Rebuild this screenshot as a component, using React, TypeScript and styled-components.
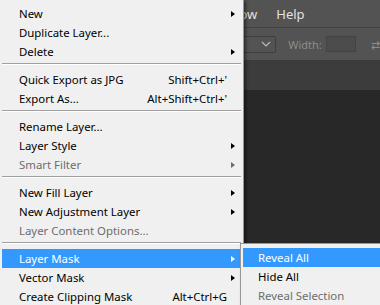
import React from "react";
import styled, { createGlobalStyle } from "styled-components";

const GlobalStyle = createGlobalStyle`
  html, body {
    margin: 0;
    padding: 0;
    background: #282828;
  }
  * { box-sizing: border-box; }
`;

const Screen = styled.div`
  position: relative;
  width: 380px;
  height: 305px;
  overflow: hidden;
  display: flex;
  flex-direction: column;
  background: #282828;
  font-family: "Noto Sans", "Open Sans", sans-serif;
`;

const MenuBar = styled.div`
  height: 27px;
  display: flex;
  align-items: center;
  gap: 19px;
  padding-left: 208px;
  background: #535353;
  color: #e2e2e2;
  font-size: 13px;
  white-space: nowrap;
`;

const OptionsBar = styled.div`
  height: 34px;
  display: flex;
  align-items: center;
  border-top: 1px solid #434343;
  border-bottom: 1px solid #3a3a3a;
  background: #535353;
  padding-left: 200px;
  white-space: nowrap;
`;

const Dropdown = styled.div`
  width: 83px;
  height: 17px;
  border: 1px solid #3e3e3e;
  border-radius: 2px;
  display: flex;
  align-items: center;
  justify-content: flex-end;
  padding-right: 4px;
  color: #bdbdbd;
`;

const Label = styled.span`
  margin-left: 12px;
  color: #8e8e8e;
  font-size: 11px;
`;

const FieldBox = styled.div`
  width: 33px;
  height: 16px;
  margin-left: 4px;
  border: 1px solid #444444;
  background: #4c4c4c;
`;

const SwapGlyph = styled.span`
  margin-left: 15px;
  color: #8e8e8e;
  font-size: 11px;
`;

const TabStrip = styled.div`
  height: 29px;
  background: #3c3c3c;
`;

const Canvas = styled.div`
  flex: 1;
  background: #282828;
`;

const Menu = styled.div<{ $left: number; $top: number; $width: number }>`
  position: absolute;
  left: ${(p) => p.$left}px;
  top: ${(p) => p.$top}px;
  width: ${(p) => p.$width}px;
  padding: 4px 0 4px;
  background: #f0f0f0;
  border: 1px solid #979797;
  box-shadow: 2px 2px 3px rgba(0, 0, 0, 0.45);
  font-size: 11.4px;
  color: #000;
`;

const Row = styled.div<{ $active?: boolean; $disabled?: boolean; $indent: number }>`
  height: 19px;
  margin: 0 2px;
  display: grid;
  grid-template-columns: 1fr auto 8px;
  align-items: center;
  padding: 0 6px 0 ${(p) => p.$indent}px;
  white-space: nowrap;
  background: ${(p) => (p.$active ? "#3399ff" : "transparent")};
  color: ${(p) => (p.$active ? "#ffffff" : p.$disabled ? "#6d6d6d" : "#000000")};
`;

const Shortcut = styled.span`
  text-align: right;
`;

const Arrow = styled.span<{ $show: boolean }>`
  justify-self: end;
  width: 0;
  height: 0;
  border-top: 3.5px solid transparent;
  border-bottom: 3.5px solid transparent;
  border-left: ${(p) => (p.$show ? "4px solid currentColor" : "0")};
`;

const Separator = styled.div`
  height: 9px;
  padding-top: 2px;
  &::after {
    content: "";
    display: block;
    height: 1px;
    margin: 0 2px;
    background: #a0a0a0;
    border-bottom: 1px solid #ffffff;
  }
`;

type Item =
  | { sep: true }
  | { label: string; shortcut?: string; sub?: boolean; disabled?: boolean; active?: boolean };

const layerMenu: Item[] = [
  { label: "New", sub: true },
  { label: "Duplicate Layer..." },
  { label: "Delete", sub: true },
  { sep: true },
  { label: "Quick Export as JPG", shortcut: "Shift+Ctrl+'" },
  { label: "Export As...", shortcut: "Alt+Shift+Ctrl+'" },
  { sep: true },
  { label: "Rename Layer..." },
  { label: "Layer Style", sub: true },
  { label: "Smart Filter", sub: true, disabled: true },
  { sep: true },
  { label: "New Fill Layer", sub: true },
  { label: "New Adjustment Layer", sub: true },
  { label: "Layer Content Options...", disabled: true },
  { sep: true },
  { label: "Layer Mask", sub: true, active: true },
  { label: "Vector Mask", sub: true },
  { label: "Create Clipping Mask", shortcut: "Alt+Ctrl+G" },
];

const maskMenu: Item[] = [
  { label: "Reveal All", active: true },
  { label: "Hide All" },
  { label: "Reveal Selection", disabled: true },
];

function MenuItems({ items, indent }: { items: Item[]; indent: number }) {
  return (
    <>
      {items.map((it, i) =>
        "sep" in it ? (
          <Separator key={i} />
        ) : (
          <Row key={i} $active={it.active} $disabled={it.disabled} $indent={indent}>
            <span>{it.label}</span>
            <Shortcut>{it.shortcut}</Shortcut>
            <Arrow $show={!!it.sub} />
          </Row>
        )
      )}
    </>
  );
}

export default function App() {
  return (
    <>
      <GlobalStyle />
      <Screen>
        <MenuBar>
          <span>Window</span>
          <span>Help</span>
        </MenuBar>
        <OptionsBar>
          <Dropdown>
            <svg width="10" height="6" viewBox="0 0 10 6">
              <path d="M1 1 L5 5 L9 1" fill="none" stroke="#bdbdbd" strokeWidth="1.1" />
            </svg>
          </Dropdown>
          <Label>Width:</Label>
          <FieldBox />
          <SwapGlyph>⇄</SwapGlyph>
        </OptionsBar>
        <TabStrip />
        <Canvas />

        <Menu $left={-1} $top={-1} $width={245}>
          <MenuItems items={layerMenu} indent={17} />
        </Menu>
        <Menu $left={240} $top={243} $width={160}>
          <MenuItems items={maskMenu} indent={15} />
        </Menu>
      </Screen>
    </>
  );
}
